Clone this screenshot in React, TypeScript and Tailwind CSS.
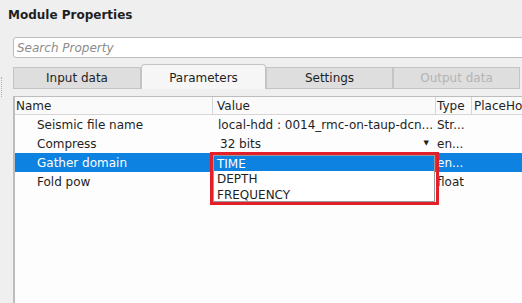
import React from "react";

// property rows shown in the tree
const rows = [
  { name: "Seismic file name", value: "local-hdd : 0014_rmc-on-taup-dcn...", type: "Str...", combo: false },
  { name: "Compress", value: "32 bits", type: "en...", combo: true },
  { name: "Gather domain", value: "", type: "en...", combo: false, selected: true },
  { name: "Fold pow", value: "", type: "float", combo: false },
];

const tabs = [
  { label: "Input data", w: "w-[128px]" },
  { label: "Parameters", w: "w-[125px]", active: true },
  { label: "Settings", w: "w-[127px]" },
  { label: "Output data", w: "w-[127px]", disabled: true },
];

export default function App() {
  return (
    <div className="relative w-[522px] h-[303px] overflow-hidden bg-[#efefef] font-['DejaVu_Sans',sans-serif] text-[12px] text-[#1f1f1f] flex flex-col">
      {/* Title */}
      <div className="h-[37px] pl-[8px] pt-[7px] font-bold text-[12px] leading-[16px]">Module Properties</div>

      {/* Search field */}
      <div className="ml-[13px] w-[520px] h-[21px] bg-white border border-[#bcbcbc] rounded-[3px] flex items-center pl-[3px] italic text-[#8c8c8c]">
        Search Property
      </div>

      {/* splitter dots */}
      <div className="absolute left-[1px] top-[77px] h-[20px] border-l border-dotted border-[#b0b0b0]" />

      {/* Tabs */}
      <div className="ml-[13px] mt-[6px] h-[25px] flex items-end">
        {tabs.map((t) =>
          t.active ? (
            <div
              key={t.label}
              className={`${t.w} h-[25px] bg-[#f6f6f6] border border-b-0 border-[#c4c4c4] rounded-t-[4px] flex items-center justify-center pt-[1px]`}
            >
              {t.label}
            </div>
          ) : (
            <div
              key={t.label}
              className={`${t.w} h-[22px] bg-[#dedede] border border-[#c4c4c4] flex items-center justify-center ${t.disabled ? "text-[#b4b4b4]" : ""}`}
            >
              {t.label}
            </div>
          )
        )}
      </div>

      {/* Property table */}
      <div className="ml-[13px] mt-[7px] flex-1 bg-[#fdfdfd] border-l-2 border-t border-[#bdbdbd] flex flex-col">
        <div className="h-[18px] flex border-b border-[#d6d6d6] bg-[#fafafa]">
          <div className="w-[198px] pl-[1px] border-r border-[#d6d6d6] flex items-center">Name</div>
          <div className="w-[223px] pl-[4px] border-r border-[#d6d6d6] flex items-center">Value</div>
          <div className="w-[36px] pl-[1px] border-r border-[#d6d6d6] flex items-center">Type</div>
          <div className="flex-1 pl-[2px] flex items-center whitespace-nowrap overflow-hidden">PlaceHo</div>
        </div>
        {rows.map((r) => (
          <div
            key={r.name}
            className={`h-[19px] flex items-center ${r.selected ? "bg-[#0d82e0] text-white" : ""}`}
          >
            <div className="w-[198px] pl-[22px] whitespace-nowrap">{r.name}</div>
            <div className="w-[223px] pl-[5px] pr-[7px] whitespace-nowrap flex items-center">
              <span className={r.combo ? "pl-[2px]" : ""}>{r.value}</span>
              {r.combo && <span className="ml-auto text-[7px] leading-none">▼</span>}
            </div>
            <div className="w-[36px] pl-[1px] whitespace-nowrap">{r.type}</div>
          </div>
        ))}
      </div>

      {/* Open combo popup */}
      <div className="absolute left-[213px] top-[155px] w-[222px] h-[47px] bg-white border border-[#9a9a9a] flex flex-col">
        <div className="h-[15px] pl-[3px] bg-[#0d82e0] text-white flex items-center">TIME</div>
        <div className="h-[16px] pl-[3px] flex items-center">DEPTH</div>
        <div className="h-[15px] pl-[3px] flex items-center">FREQUENCY</div>
      </div>

      {/* red annotation box */}
      <div className="absolute left-[210px] top-[152px] w-[229px] h-[53px] border-[3px] border-[#e3202a]" />
    </div>
  );
}
